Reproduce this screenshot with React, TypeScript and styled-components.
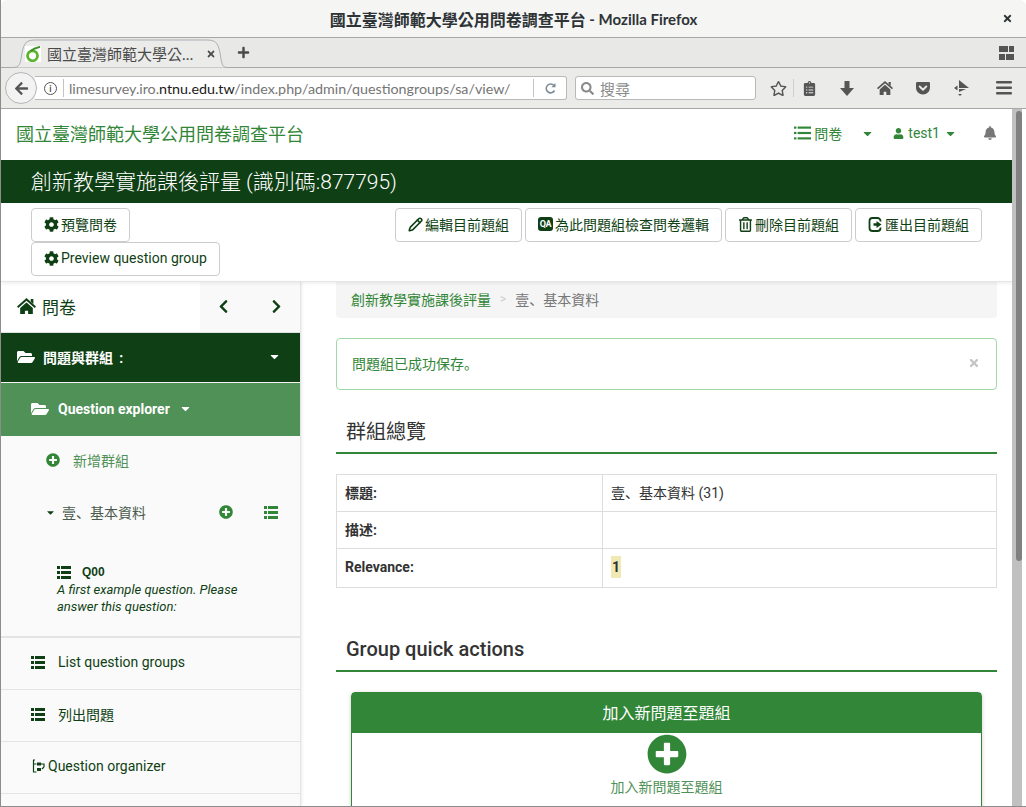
import React from 'react';
import styled, { createGlobalStyle } from 'styled-components';
import {
  FaArrowLeft,
  FaBell,
  FaCaretDown,
  FaChevronLeft,
  FaChevronRight,
  FaClipboardList,
  FaCog,
  FaFolderOpen,
  FaGetPocket,
  FaPlus,
  FaPlusCircle,
  FaRegStar,
  FaRegTrashAlt,
  FaSearch,
  FaTimes,
  FaUser,
} from 'react-icons/fa';
import { Pencil } from 'lucide-react';

const FONT = `Roboto, "Noto Sans CJK SC", sans-serif`;
const CHROME_FONT = `Lato, "Noto Sans CJK TC", sans-serif`;
const DARK = '#0f3f14';
const GREEN = '#328637';

const GlobalStyle = createGlobalStyle`
  html, body {
    margin: 0;
    padding: 0;
    height: 100%;
    overflow: hidden;
    background: #fff;
  }
  * {
    box-sizing: border-box;
  }
`;

const Window = styled.div`
  width: 1026px;
  height: 807px;
  display: flex;
  flex-direction: column;
  overflow: hidden;
  border-bottom: 1px solid #8c8c8c;
  border-left: 1px solid #8c8c8c;
  font-family: ${FONT};
`;

const TitleBar = styled.div`
  height: 38px;
  flex: none;
  display: flex;
  align-items: center;
  justify-content: center;
  position: relative;
  background: #f5f5f4;
  border-bottom: 1px solid #a8a8a6;
  border-radius: 6px 6px 0 0;
  font-family: ${CHROME_FONT};
  font-weight: 700;
  font-size: 16px;
  color: #2e3436;
`;

const TitleLatin = styled.span`
  font-size: 15px;
  white-space: pre;
`;

const CloseGlyph = styled.span`
  position: absolute;
  right: 13px;
  top: 13px;
  display: flex;
  font-size: 11px;
  color: #2e3436;
`;

const TabStrip = styled.div`
  height: 30px;
  flex: none;
  display: flex;
  align-items: flex-end;
  position: relative;
  padding-left: 11px;
  background: #e8e8e7;
  border-bottom: 1px solid #a8a8a6;
`;

const Tab = styled.div`
  width: 216px;
  height: 29px;
  position: relative;
  display: flex;
  align-items: center;
  padding: 0 12px 0 13px;
  gap: 6px;
  margin-bottom: -1px;
  font-family: ${CHROME_FONT};
  font-size: 15px;
  color: #4a4a4a;
`;

const TabShape = styled.svg`
  position: absolute;
  left: 0;
  top: 0;
`;

const TabTitle = styled.span`
  position: relative;
  width: 148px;
  white-space: nowrap;
`;

const TabClose = styled.span`
  position: relative;
  display: flex;
  font-size: 10px;
  color: #4a4a4a;
  margin-left: 5px;
`;

const Favicon = styled.svg`
  position: relative;
  flex: none;
`;

const NewTab = styled.span`
  position: relative;
  display: flex;
  font-size: 13px;
  color: #4a4a4a;
  margin: 0 0 8px 9px;
`;

const GridGlyph = styled.svg`
  position: absolute;
  right: 12px;
  top: 8px;
`;

const NavBar = styled.div`
  height: 41px;
  flex: none;
  display: flex;
  align-items: center;
  overflow: hidden;
  background: #ebebea;
  border-bottom: 1px solid #a8a8a6;
  padding-left: 4px;

  > * {
    flex: none;
  }
`;

const BackButton = styled.div`
  width: 32px;
  height: 32px;
  display: flex;
  align-items: center;
  justify-content: center;
  background: #f3f3f3;
  border: 1px solid #b5b5b5;
  border-radius: 50%;
  color: #555;
  font-size: 15px;
  position: relative;
  z-index: 1;
`;

const UrlBar = styled.div`
  width: 532px;
  height: 24px;
  margin-left: -2px;
  display: flex;
  align-items: center;
  background: #fff;
  border: 1px solid #b9b9b9;
  border-left: none;
  border-radius: 0 3px 3px 0;
  padding-left: 9px;
  font-family: ${CHROME_FONT};
  font-size: 14.3px;
  color: #757575;
`;

const InfoDot = styled.span`
  width: 13px;
  height: 13px;
  flex: none;
  display: flex;
  align-items: center;
  justify-content: center;
  border: 1.5px solid #555;
  border-radius: 50%;
  font-size: 9px;
  font-weight: 700;
  color: #555;
`;

const UrlDivider = styled.span`
  width: 1px;
  height: 18px;
  flex: none;
  margin: 0 5px 0 6px;
  background: #c4c4c4;
`;

const UrlText = styled.span`
  flex: 1;
  white-space: nowrap;
  overflow: hidden;
`;

const UrlHost = styled.span`
  color: #1a1a1a;
`;

const ReloadBox = styled.span`
  width: 33px;
  height: 18px;
  flex: none;
  display: flex;
  align-items: center;
  justify-content: center;
  border-left: 1px solid #c4c4c4;
`;

const SearchBar = styled.div`
  width: 181px;
  height: 24px;
  margin-left: 8px;
  display: flex;
  align-items: center;
  gap: 6px;
  padding-left: 5px;
  background: #fff;
  border: 1px solid #b9b9b9;
  border-radius: 3px;
  font-family: ${CHROME_FONT};
  font-size: 15px;
  color: #8a8a8a;
`;

const ToolIcons = styled.div`
  display: flex;
  align-items: center;
  margin-left: 11px;
  color: #555;
`;

const ToolIcon = styled.span<{ $width: number }>`
  width: ${({ $width }) => $width}px;
  flex: none;
  display: flex;
  justify-content: center;
  font-size: 15px;
`;

const ToolSep = styled.span`
  width: 1px;
  height: 18px;
  flex: none;
  margin-left: 4px;
  background: #cfcfcf;
`;

const Viewport = styled.div`
  flex: 1;
  min-height: 0;
  display: flex;
`;

const Page = styled.div`
  flex: 1;
  min-width: 0;
  display: flex;
  flex-direction: column;
  background: #fff;
  overflow: hidden;
`;

const ScrollTrack = styled.div`
  width: 14px;
  flex: none;
  padding: 2px 4px 0 4px;
  background: linear-gradient(to right, #bfc0bf 10px, #fff 10px);
`;

const ScrollThumb = styled.div`
  width: 6px;
  height: 450px;
  background: #7f807f;
  border-radius: 3px;
`;

const Navbar = styled.div`
  height: 51px;
  flex: none;
  display: flex;
  align-items: center;
  justify-content: space-between;
  padding: 0 15px 3px 15px;
  color: ${GREEN};
`;

const Brand = styled.div`
  font-size: 18px;
  color: ${GREEN};
`;

const NavRight = styled.div`
  display: flex;
  align-items: center;
  font-size: 14px;
`;

const NavItem = styled.span<{ $gap: number; $after?: number }>`
  display: flex;
  align-items: center;
  gap: ${({ $gap }) => $gap}px;
  margin-right: ${({ $after }) => $after ?? 0}px;
`;

const SmallCaret = styled(FaCaretDown)`
  font-size: 13px;
`;

const TitleBand = styled.div`
  height: 43px;
  flex: none;
  display: flex;
  align-items: center;
  padding: 0 0 3px 30px;
  background: ${DARK};
  color: #fff;
  font-size: 21px;
  font-weight: 300;
`;

const TopBar = styled.div`
  height: 79px;
  flex: none;
  display: flex;
  justify-content: space-between;
  padding: 5px 30px 0 30px;
  border-bottom: 1px solid #e6e6e6;
  box-shadow: 0 2px 3px rgba(0, 0, 0, 0.06);
  position: relative;
  z-index: 1;
`;

const LeftStack = styled.div`
  display: flex;
  flex-direction: column;
  align-items: flex-start;
`;

const RightButtons = styled.div`
  display: flex;
  gap: 3px;
  align-items: flex-start;
`;

const Button = styled.div`
  height: 34px;
  display: flex;
  align-items: center;
  gap: 2px;
  padding: 0 12px 2px;
  background: #fff;
  border: 1px solid #ccc;
  border-radius: 4px;
  color: ${DARK};
  font-size: 14px;
  white-space: nowrap;
`;

const QaBadge = styled.span`
  width: 15px;
  height: 14px;
  display: flex;
  align-items: center;
  justify-content: center;
  background: ${DARK};
  color: #fff;
  border-radius: 3px;
  font-size: 9px;
  font-weight: 700;
  letter-spacing: -0.5px;
`;

const Columns = styled.div`
  flex: 1;
  min-height: 0;
  display: flex;
`;

const Sidebar = styled.div`
  width: 300px;
  flex: none;
  display: flex;
  flex-direction: column;
  background: #fafafa;
  border-right: 1px solid #e4e4e4;
  box-shadow: 1px 0 3px rgba(0, 0, 0, 0.08);
`;

const SideHead = styled.div`
  height: 51px;
  flex: none;
  display: flex;
  background: #fff;
  color: ${DARK};
  border-bottom: 1px solid #e0e0e0;
`;

const SideHeadTitle = styled.div`
  width: 199px;
  display: flex;
  align-items: center;
  gap: 6px;
  padding: 0 0 2px 16px;
  font-size: 17px;
`;

const HeadArrows = styled.div`
  flex: 1;
  display: flex;
  align-items: center;
  justify-content: space-between;
  padding: 0 16px 2px;
  background: #f9f9f9;
  font-size: 15px;
`;

const DarkRow = styled.div`
  height: 50px;
  flex: none;
  display: flex;
  align-items: center;
  justify-content: space-between;
  padding: 0 19px 2px 16px;
  background: ${DARK};
  border-bottom: 1px solid #f4f4f4;
  color: #fff;
  font-weight: 700;
  font-size: 14px;
`;

const RowLabel = styled.span`
  display: flex;
  align-items: center;
  gap: 8px;
`;

const ExplorerRow = styled.div`
  height: 53px;
  flex: none;
  display: flex;
  align-items: center;
  gap: 9px;
  padding: 0 0 2px 30px;
  background: #4f9157;
  color: #fff;
  font-weight: 700;
  font-size: 14px;
`;

const AddGroupRow = styled.div`
  height: 50px;
  flex: none;
  display: flex;
  align-items: center;
  gap: 13px;
  padding: 0 0 2px 45px;
  color: #4f9157;
  font-size: 14px;
`;

const GroupRow = styled.div`
  height: 54px;
  flex: none;
  display: flex;
  align-items: center;
  padding: 0 22px 2px 44px;
  color: #4a5a4c;
  font-size: 14px;
`;

const GroupName = styled.span`
  flex: 1;
  display: flex;
  align-items: center;
  gap: 6px;
`;

const GroupAdd = styled(FaPlusCircle)`
  color: ${GREEN};
  font-size: 14px;
  margin-right: 31px;
`;

const GroupListIcon = styled.span`
  display: flex;
  color: ${GREEN};
`;

const QuestionBlock = styled.div`
  height: 98px;
  flex: none;
  padding: 24px 40px 0 56px;
  border-bottom: 2px solid #e4e4e4;
  color: ${DARK};
  font-size: 13px;
  line-height: 17px;
`;

const QuestionCode = styled.div`
  display: flex;
  align-items: center;
  gap: 11px;
  font-family: "Liberation Sans", sans-serif;
  font-size: 12px;
  font-weight: 700;
`;

const QuestionText = styled.div`
  font-style: italic;
`;

const MenuRow = styled.div<{ $gap: number; $pad: number }>`
  height: 52px;
  flex: none;
  display: flex;
  align-items: center;
  gap: ${({ $gap }) => $gap}px;
  padding: 0 0 3px ${({ $pad }) => $pad}px;
  border-bottom: 1px solid #e4e4e4;
  color: ${DARK};
  font-size: 14px;
`;

const Content = styled.div`
  flex: 1;
  min-width: 0;
  padding: 0 15px 0 35px;
  display: flex;
  flex-direction: column;
`;

const Breadcrumb = styled.div`
  height: 36px;
  flex: none;
  display: flex;
  align-items: center;
  gap: 9px;
  padding: 0 0 2px 15px;
  background: #f5f5f5;
  border-radius: 0 0 4px 4px;
  font-size: 14px;
  color: ${GREEN};
`;

const CrumbSep = styled.span`
  color: #ccc;
  font-size: 12px;
`;

const CrumbActive = styled.span`
  color: #777;
`;

const Alert = styled.div`
  height: 52px;
  flex: none;
  margin-top: 20px;
  display: flex;
  align-items: center;
  justify-content: space-between;
  padding: 0 16px 2px 15px;
  border: 1px solid #a3d9a8;
  border-radius: 4px;
  color: ${GREEN};
  font-size: 14px;
`;

const AlertClose = styled(FaTimes)`
  color: #c4c4c4;
  font-size: 12px;
`;

const SectionHead = styled.div<{ $top: number; $weight: number }>`
  height: 43px;
  flex: none;
  margin-top: ${({ $top }) => $top}px;
  display: flex;
  align-items: center;
  padding: 0 10px 2px;
  border-bottom: 2px solid ${GREEN};
  color: #333;
  font-size: 20px;
  font-weight: ${({ $weight }) => $weight};
`;

const InfoTable = styled.table`
  width: 100%;
  flex: none;
  margin-top: 20px;
  border-collapse: collapse;
  font-size: 14px;
  color: #333;

  td {
    border: 1px solid #ddd;
    padding: 0 8px 2px;
    height: 37px;
  }
  tr:last-child td {
    height: 39px;
  }
  td:first-child {
    width: 266px;
    font-weight: 700;
  }
`;

const Highlight = styled.span`
  background: #f0e9b4;
  font-weight: 700;
  padding: 3px 1px;
`;

const ActionCard = styled.div`
  margin: 20px 15px 0;
  flex: none;
  height: 130px;
  border: 1px solid ${GREEN};
  border-radius: 4px;
  box-shadow: 0 1px 4px rgba(0, 0, 0, 0.2);
  display: flex;
  flex-direction: column;
  align-items: center;
`;

const CardHead = styled.div`
  width: 100%;
  height: 40px;
  flex: none;
  display: flex;
  align-items: center;
  justify-content: center;
  padding-bottom: 3px;
  background: ${GREEN};
  color: #fff;
  font-size: 16px;
`;

const CardIcon = styled(FaPlusCircle)`
  margin-top: 1px;
  color: ${GREEN};
  font-size: 40px;
`;

const CardLabel = styled.div`
  margin-top: 2px;
  color: #4f9157;
  font-size: 14px;
`;

// fa4 style list: square bullets and bars
function ListIcon({ w = 14, h = 13, thin = false }: { w?: number; h?: number; thin?: boolean }) {
  const bar = thin ? 2 : 3;
  const rows = thin ? [0.5, 5.5, 10.5] : [0, 5, 10];
  return (
    <svg width={w} height={h} viewBox="0 0 14 13" fill="currentColor" preserveAspectRatio="none">
      {rows.map((y) => (
        <g key={y}>
          <rect x="0" y={y} width={thin ? 2 : 3} height={bar} />
          <rect x={thin ? 3 : 4} y={y} width={thin ? 11 : 10} height={bar} />
        </g>
      ))}
    </svg>
  );
}

function HomeIcon({ size }: { size: number }) {
  return (
    <svg width={size} height={(size * 16) / 18} viewBox="0 0 18 16" fill="currentColor">
      <path d="M9 0L18 8l-1.2 1.4L9 2.5 1.2 9.4 0 8z" />
      <path d="M3 9.5L9 4.3l6 5.2V16h-4.5v-4h-3v4H3z" />
      <path d="M13 1h2.5v4.6L13 3.4z" />
    </svg>
  );
}

function ExportIcon() {
  return (
    <svg width="15" height="15" viewBox="0 0 14 15">
      <path d="M12 4.5V4a3 3 0 0 0-3-3H4a3 3 0 0 0-3 3v7a3 3 0 0 0 3 3h5a3 3 0 0 0 3-3v-.5" fill="none" stroke={DARK} strokeWidth="1.8" />
      <path d="M5 6.3H8V4L13 7.5 8 11V8.7H5z" fill={DARK} />
    </svg>
  );
}

function OrganizerIcon() {
  return (
    <svg width="14" height="14" viewBox="0 0 14 14" fill="none" stroke={DARK} strokeWidth="1.2">
      <path d="M1.5 1v12h3M1.5 5h3" />
      <path d="M1 1h2" />
      <rect x="5" y="3.5" width="4" height="3" fill={DARK} stroke="none" />
      <rect x="5" y="9" width="4" height="3" fill={DARK} stroke="none" />
      <path d="M9 5h3v3M12 8l-2 2" />
    </svg>
  );
}

function ReloadIcon() {
  return (
    <svg width="13" height="13" viewBox="0 0 13 13" fill="none">
      <path d="M10.5 8.5A4.4 4.4 0 1 1 10 3.6" stroke="#7d8b99" strokeWidth="1.6" />
      <path d="M11.5 1v4.2H7.3z" fill="#7d8b99" />
    </svg>
  );
}

function App() {
  return (
    <Window>
      <GlobalStyle />
      <TitleBar>
        國立臺灣師範大學公用問卷調查平台
        <TitleLatin> - Mozilla Firefox</TitleLatin>
        <CloseGlyph>
          <FaTimes />
        </CloseGlyph>
      </TitleBar>
      <TabStrip>
        <Tab>
          <TabShape width="216" height="29" viewBox="0 0 216 29">
            <path
              d="M0 28.5C8 28.5 8 26 10 14 12 3 15 1 24 1H194C203 1 206 3 208 14 210 26 210 28.5 216 28.5"
              fill="#ebebea"
              stroke="#a9b0b3"
            />
          </TabShape>
          <Favicon width="16" height="16" viewBox="0 0 16 16">
            <rect width="16" height="16" fill="#fff" />
            <circle cx="7.5" cy="9.8" r="5" fill="none" stroke="#5ab52f" strokeWidth="2.8" />
            <path d="M5.5 5C8 3 11 1.8 15 0.8" fill="none" stroke="#3c8f25" strokeWidth="1.8" />
          </Favicon>
          <TabTitle>國立臺灣師範大學公…</TabTitle>
          <TabClose>
            <FaTimes />
          </TabClose>
        </Tab>
        <NewTab>
          <FaPlus />
        </NewTab>
        <GridGlyph width="15" height="15" viewBox="0 0 15 15" fill="#555">
          <rect x="0" y="0" width="9" height="6" />
          <rect x="10" y="0" width="5" height="6" />
          <rect x="0" y="8" width="6" height="6" />
          <rect x="7" y="8" width="8" height="6" />
        </GridGlyph>
      </TabStrip>
      <NavBar>
        <BackButton>
          <FaArrowLeft />
        </BackButton>
        <UrlBar>
          <InfoDot>i</InfoDot>
          <UrlDivider />
          <UrlText>
            limesurvey.iro.<UrlHost>ntnu.edu.tw</UrlHost>/index.php/admin/questiongroups/sa/view/
          </UrlText>
          <ReloadBox>
            <ReloadIcon />
          </ReloadBox>
        </UrlBar>
        <SearchBar>
          <FaSearch size={13} color="#8a8a8a" />
          搜尋
        </SearchBar>
        <ToolIcons>
          <ToolIcon $width={22}>
            <FaRegStar size={17} />
          </ToolIcon>
          <ToolSep />
          <ToolIcon $width={30}>
            <FaClipboardList />
          </ToolIcon>
          <ToolIcon $width={46}>
            <svg width="14" height="15" viewBox="0 0 14 15" fill="#555">
              <path d="M4.5 0h5v7H14l-7 8-7-8h4.5z" />
            </svg>
          </ToolIcon>
          <ToolIcon $width={30}>
            <HomeIcon size={16} />
          </ToolIcon>
          <ToolIcon $width={46}>
            <FaGetPocket size={16} />
          </ToolIcon>
          <ToolIcon $width={30}>
            <svg width="16" height="16" viewBox="0 0 16 16" fill="#555">
              <path d="M6 0l10 8H6z" />
              <path d="M6 9h7l-7 3z" />
              <path d="M4.5 5.5v5L1 8zM5 14h4l-2 2z" />
            </svg>
          </ToolIcon>
          <ToolIcon $width={56}>
            <svg width="16" height="14" viewBox="0 0 16 14" fill="#555">
              <rect y="0" width="16" height="2.4" rx="1" />
              <rect y="5.5" width="16" height="2.4" rx="1" />
              <rect y="11" width="16" height="2.4" rx="1" />
            </svg>
          </ToolIcon>
        </ToolIcons>
      </NavBar>
      <Viewport>
        <Page>
          <Navbar>
            <Brand>國立臺灣師範大學公用問卷調查平台</Brand>
            <NavRight>
              <NavItem $gap={3} $after={19}>
                <ListIcon w={17} h={14} thin />
                問卷
              </NavItem>
              <NavItem $gap={0} $after={19}>
                <SmallCaret />
              </NavItem>
              <NavItem $gap={4} $after={26}>
                <FaUser size={11} />
                test1
                <SmallCaret />
              </NavItem>
              <FaBell size={14} color="#777" />
            </NavRight>
          </Navbar>
          <TitleBand>創新教學實施課後評量 (識別碼:877795)</TitleBand>
          <TopBar>
            <LeftStack>
              <Button>
                <FaCog size={15} />
                預覽問卷
              </Button>
              <Button>
                <FaCog size={15} />
                Preview question group
              </Button>
            </LeftStack>
            <RightButtons>
              <Button>
                <Pencil size={15} strokeWidth={2.6} />
                編輯目前題組
              </Button>
              <Button>
                <QaBadge>QA</QaBadge>
                為此問題組檢查問卷邏輯
              </Button>
              <Button>
                <FaRegTrashAlt size={15} />
                刪除目前題組
              </Button>
              <Button>
                <ExportIcon />
                匯出目前題組
              </Button>
            </RightButtons>
          </TopBar>
          <Columns>
            <Sidebar>
              <SideHead>
                <SideHeadTitle>
                  <HomeIcon size={19} />
                  問卷
                </SideHeadTitle>
                <HeadArrows>
                  <FaChevronLeft />
                  <FaChevronRight />
                </HeadArrows>
              </SideHead>
              <DarkRow>
                <RowLabel>
                  <FaFolderOpen size={18} />
                  問題與群組{'\u00a0\u2009'}:
                </RowLabel>
                <FaCaretDown size={13} />
              </DarkRow>
              <ExplorerRow>
                <FaFolderOpen size={18} />
                Question explorer
                <SmallCaret />
              </ExplorerRow>
              <AddGroupRow>
                <FaPlusCircle size={14} color={GREEN} />
                新增群組
              </AddGroupRow>
              <GroupRow>
                <GroupName>
                  <FaCaretDown size={11} color={DARK} />
                  壹、基本資料
                </GroupName>
                <GroupAdd />
                <GroupListIcon>
                  <ListIcon />
                </GroupListIcon>
              </GroupRow>
              <QuestionBlock>
                <QuestionCode>
                  <ListIcon />
                  Q00
                </QuestionCode>
                <QuestionText>A first example question. Please answer this question:</QuestionText>
              </QuestionBlock>
              <MenuRow $gap={13} $pad={30}>
                <ListIcon />
                List question groups
              </MenuRow>
              <MenuRow $gap={13} $pad={30}>
                <ListIcon />
                列出問題
              </MenuRow>
              <MenuRow $gap={2} $pad={31}>
                <OrganizerIcon />
                Question organizer
              </MenuRow>
            </Sidebar>
            <Content>
              <Breadcrumb>
                創新教學實施課後評量
                <CrumbSep>&gt;</CrumbSep>
                <CrumbActive>壹、基本資料</CrumbActive>
              </Breadcrumb>
              <Alert>
                問題組已成功保存。
                <AlertClose />
              </Alert>
              <SectionHead $top={21} $weight={400}>
                群組總覽
              </SectionHead>
              <InfoTable>
                <tbody>
                  <tr>
                    <td>標題:</td>
                    <td>壹、基本資料 (31)</td>
                  </tr>
                  <tr>
                    <td>描述:</td>
                    <td></td>
                  </tr>
                  <tr>
                    <td>Relevance:</td>
                    <td>
                      <Highlight>1</Highlight>
                    </td>
                  </tr>
                </tbody>
              </InfoTable>
              <SectionHead $top={41} $weight={500}>
                Group quick actions
              </SectionHead>
              <ActionCard>
                <CardHead>加入新問題至題組</CardHead>
                <CardIcon />
                <CardLabel>加入新問題至題組</CardLabel>
              </ActionCard>
            </Content>
          </Columns>
        </Page>
        <ScrollTrack>
          <ScrollThumb />
        </ScrollTrack>
      </Viewport>
    </Window>
  );
}

export default App;
